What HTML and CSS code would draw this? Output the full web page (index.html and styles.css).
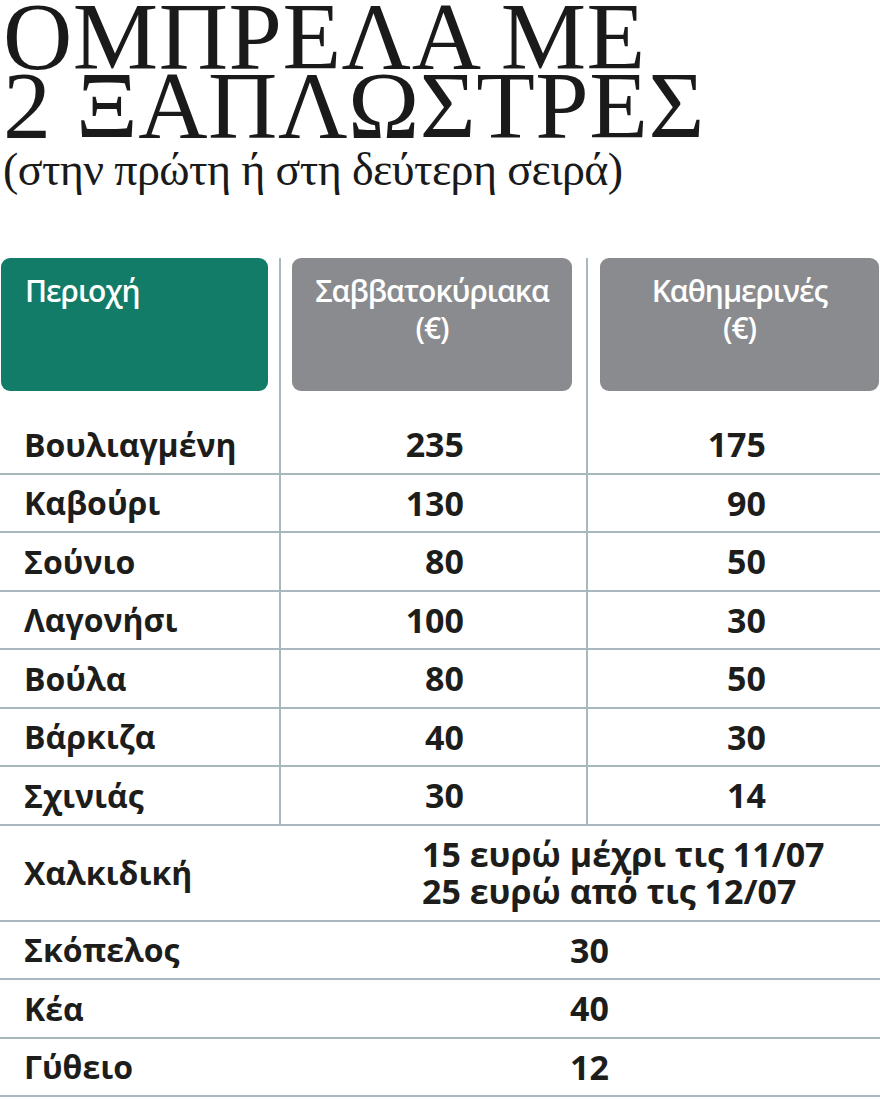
FILE: index.html
```html
<!DOCTYPE html>
<html lang="el">
<head>
<meta charset="utf-8">
<title>Ομπρέλα με 2 ξαπλώστρες</title>
<link rel="stylesheet" href="styles.css">
</head>
<body>
<header class="title-block">
  <h1 class="title"><span class="title-line">ΟΜΠΡΕΛΑ ΜΕ</span><span class="title-line">2 ΞΑΠΛΩΣΤΡΕΣ</span></h1>
  <p class="subtitle">(στην πρώτη ή στη δεύτερη σειρά)</p>
</header>
<main class="price-table">
  <div class="split">
    <div class="row head-row">
      <div class="cell c1"><div class="head head-green">Περιοχή</div></div>
      <div class="cell c2"><div class="head head-gray">Σαββατοκύριακα<br>(€)</div></div>
      <div class="cell c3"><div class="head head-gray">Καθημερινές<br>(€)</div></div>
    </div>
    <div class="row body-row"><div class="cell c1 label">Βουλιαγμένη</div><div class="cell c2 num">235</div><div class="cell c3 num">175</div></div>
    <div class="row body-row"><div class="cell c1 label">Καβούρι</div><div class="cell c2 num">130</div><div class="cell c3 num">90</div></div>
    <div class="row body-row"><div class="cell c1 label">Σούνιο</div><div class="cell c2 num">80</div><div class="cell c3 num">50</div></div>
    <div class="row body-row"><div class="cell c1 label">Λαγονήσι</div><div class="cell c2 num">100</div><div class="cell c3 num">30</div></div>
    <div class="row body-row"><div class="cell c1 label">Βούλα</div><div class="cell c2 num">80</div><div class="cell c3 num">50</div></div>
    <div class="row body-row"><div class="cell c1 label">Βάρκιζα</div><div class="cell c2 num">40</div><div class="cell c3 num">30</div></div>
    <div class="row body-row"><div class="cell c1 label">Σχινιάς</div><div class="cell c2 num">30</div><div class="cell c3 num">14</div></div>
  </div>
  <div class="row wide-row tall"><div class="cell label">Χαλκιδική</div><div class="cell note">15 ευρώ μέχρι τις 11/07<br>25 ευρώ από τις 12/07</div></div>
  <div class="row wide-row"><div class="cell label">Σκόπελος</div><div class="cell single">30</div></div>
  <div class="row wide-row"><div class="cell label">Κέα</div><div class="cell single">40</div></div>
  <div class="row wide-row"><div class="cell label">Γύθειο</div><div class="cell single">12</div></div>
</main>
</body>
</html>
```
FILE: styles.css
```css
html, body {
  margin: 0;
  padding: 0;
  background: #ffffff;
}
body {
  width: 880px;
  color: #1d1d1b;
}
.title-block {
  padding: 0 0 0 3px;
}
.title {
  margin: 0;
  font-family: "Liberation Serif", "DejaVu Serif", serif;
  font-weight: normal;
  font-size: 96px;
  line-height: 69px;
  letter-spacing: 0.5px;
  color: #1a1a1a;
  padding-top: 2px;
}
.title-line {
  display: block;
}
.subtitle {
  margin: 4px 0 0 0;
  font-family: "Liberation Serif", "DejaVu Serif", serif;
  font-size: 46px;
  line-height: 52px;
  letter-spacing: -0.6px;
  color: #1a1a1a;
}
.price-table {
  margin-top: 62px;
  font-family: "Open Sans", "DejaVu Sans", sans-serif;
}
.row {
  display: grid;
  grid-template-columns: 279px 307px 294px;
  align-items: stretch;
}
.body-row, .wide-row {
  height: 58.5px;
  box-sizing: border-box;
  border-bottom: 2px solid #a9b7bf;
}
.c2, .c3 {
  border-left: 2px solid #a9b7bf;
}
.head-row .cell {
  padding-bottom: 25px;
}
.head-row .c1 { padding-left: 1px; padding-right: 11px; }
.head-row .c2 { padding-left: 11px; padding-right: 14px; }
.head-row .c3 { padding-left: 12px; padding-right: 1px; }
.head {
  height: 133px;
  box-sizing: border-box;
  border-radius: 9px;
  color: #ffffff;
  font-size: 30px;
  font-weight: 600;
  line-height: 37px;
  letter-spacing: -1px;
  padding-top: 14px;
}
.head-green {
  background: #127c69;
  padding-left: 24px;
}
.head-gray {
  background: #8a8b8e;
  text-align: center;
}
.cell {
  display: flex;
  align-items: center;
}
.head-row .cell {
  display: block;
}
.label {
  padding-left: 24px;
  font-size: 32px;
  font-weight: 700;
  color: #1d1d1b;
}
.num {
  justify-content: flex-end;
  font-size: 34px;
  font-weight: 700;
}
.c2.num { padding-right: 122px; }
.c3.num { padding-right: 114px; }
.wide-row {
  grid-template-columns: 422px 458px;
}
.wide-row.tall {
  height: 96px;
}
.note {
  font-size: 34px;
  font-weight: 700;
  line-height: 37px;
}
.single {
  font-size: 34px;
  font-weight: 700;
  padding-left: 148px;
}
```
